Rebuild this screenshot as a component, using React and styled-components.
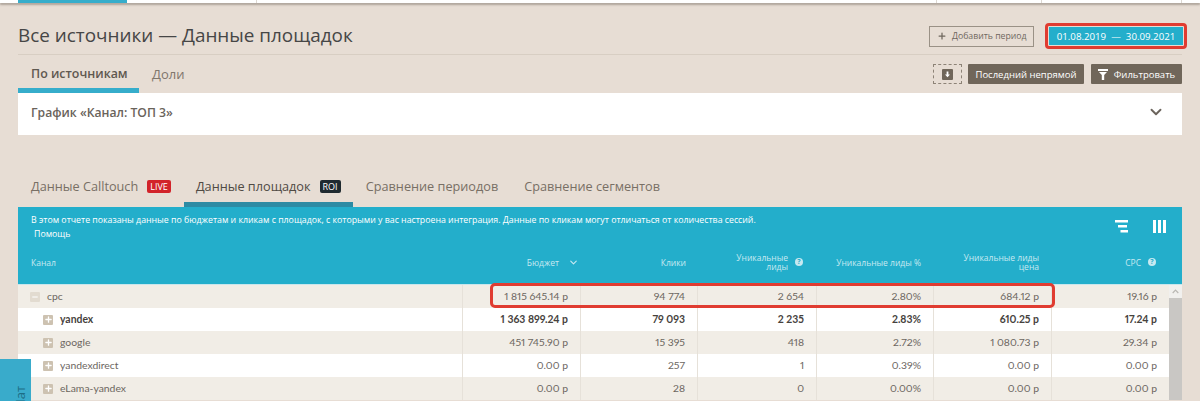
import React from 'react';
import styled, { createGlobalStyle } from 'styled-components';
import { Plus, ChevronDown, Minus } from 'lucide-react';

const GlobalStyle = createGlobalStyle`
  html, body {
    margin: 0;
    padding: 0;
    background: #e7ddd4;
    font-family: "Open Sans", "Noto Sans", sans-serif;
  }
  * { box-sizing: border-box; }
`;

const Page = styled('div')`
  position: relative;
  width: 1200px;
  height: 401px;
  overflow: hidden;
`;

const TopStrip = styled('div')`
  display: flex;
  height: 3px;
  background: #fff;
  box-shadow: 0 2px 2px rgba(90, 80, 70, 0.4);
  padding-left: 18px;
`;

const TopStripItem = styled('div')`
  width: ${p => p.$width}px;
  height: 3px;
  background: ${p => (p.$active ? '#36adcb' : 'transparent')};
  border-right: ${p => (p.$active ? 'none' : '1px solid #ddd8d2')};
`;

const Content = styled('div')`
  margin: 0 18px;
`;

const TitleRow = styled('div')`
  display: flex;
  align-items: center;
  justify-content: space-between;
  height: 52px;
  padding-top: 15px;
  border-bottom: 1px solid #d8cec3;
`;

const Title = styled('h1')`
  margin: -3px 0 0;
  font-size: 18.9px;
  font-weight: 400;
  color: #464646;
`;

const PeriodGroup = styled('div')`
  display: flex;
  align-items: center;
  gap: 11px;
  margin-right: -5px;
`;

const AddPeriod = styled('div')`
  display: flex;
  align-items: center;
  gap: 5px;
  width: 105px;
  height: 21px;
  padding-left: 7px;
  border: 1px solid #9a9186;
  font-size: 8.7px;
  color: #6f675e;
  white-space: nowrap;
`;

const DateHighlight = styled('div')`
  padding: 1px;
  border: 3px solid #e03c31;
  border-radius: 4px;
`;

const DateButton = styled('div')`
  display: flex;
  align-items: center;
  justify-content: center;
  width: 134px;
  height: 18px;
  background: #24aecb;
  color: #fff;
  font-size: 9.7px;
  white-space: pre;
`;

const SubRow = styled('div')`
  display: flex;
  align-items: flex-start;
  justify-content: space-between;
  height: 38px;
`;

const SubTabs = styled('div')`
  display: flex;
`;

const SubTab = styled('div')`
  width: ${p => p.$width}px;
  height: 38px;
  padding: 10px 0 0 13px;
  font-size: ${p => (p.$active ? 12.4 : 13)}px;
  font-weight: ${p => (p.$active ? 600 : 400)};
  color: ${p => (p.$active ? '#5f5850' : '#7f766c')};
  border-bottom: ${p => (p.$active ? '5px solid #36adcb' : 'none')};
`;

const Actions = styled('div')`
  display: flex;
  align-items: center;
  gap: 7px;
  padding-top: 9px;
`;

const ExportBox = styled('div')`
  display: flex;
  align-items: center;
  justify-content: center;
  width: 29px;
  height: 20px;
  margin-right: -1px;
  border: 1px dashed #8d8377;
`;

const ExportIcon = styled('div')`
  display: flex;
  align-items: center;
  justify-content: center;
  width: 11px;
  height: 11px;
  border-radius: 1px;
  background: #70665a;
`;

const DarkButton = styled('div')`
  display: flex;
  align-items: center;
  justify-content: center;
  gap: 6px;
  width: ${p => p.$width}px;
  height: 20px;
  background: #70665a;
  border-radius: 1px;
  color: #fff;
  font-size: 9.5px;
  white-space: nowrap;
`;

const ChartPanel = styled('div')`
  display: flex;
  align-items: center;
  justify-content: space-between;
  height: 42px;
  padding: 0 17px 4px 13px;
  background: #fff;
  font-size: 12.2px;
  font-weight: 600;
  color: #6a635b;
`;

const ReportTabs = styled('div')`
  display: flex;
  height: 42px;
  margin-top: 30px;
  padding-left: 13px;
`;

const ReportTab = styled('div')`
  display: flex;
  align-items: flex-start;
  gap: 9px;
  height: 42px;
  margin-right: ${p => p.$gap ?? 26}px;
  padding-top: 12px;
  font-size: 12.7px;
  color: ${p => (p.$active ? '#4f4a44' : '#786f65')};
  ${p => p.$active && 'width: 169px; justify-content: center; border-bottom: 5px solid #2d8ba4;'}
  white-space: nowrap;
`;

const Badge = styled('span')`
  display: inline-block;
  height: 13px;
  margin-top: 3px;
  padding: 0 3px;
  border-radius: 2px;
  background: ${p => p.$bg};
  color: #fff;
  font-size: 9px;
  line-height: 13px;
`;

const Card = styled('div')`
  position: relative;
  background: #23aecb;
`;

const InfoBlock = styled('div')`
  height: 41px;
  padding: 6px 0 0 13px;
  color: #fff;
  font-size: 8.77px;
  line-height: 14px;
  white-space: nowrap;
`;

const HelpLink = styled('div')`
  padding-left: 3px;
`;

const ViewIcons = styled('div')`
  position: absolute;
  top: 13px;
  right: 16px;
  display: flex;
  gap: 25px;
`;

const HeaderRow = styled('div')`
  display: grid;
  grid-template-columns: 445px 118px 117px 119px 117px 118px 117px 13px;
  height: 37px;
  padding-bottom: 8px;
  align-items: center;
  border-bottom: 1px solid #c9e6ec;
  color: #c7e9f1;
  font-size: 8.5px;
  line-height: 9px;
`;

const HeaderCell = styled('div')`
  display: flex;
  align-items: center;
  justify-content: ${p => (p.$left ? 'flex-start' : 'flex-end')};
  gap: ${p => p.$gap || 8}px;
  padding: ${p => (p.$left ? '0 0 0 13px' : `0 ${p.$pad ?? 13}px 0 0`)};
  text-align: right;
  white-space: nowrap;
`;

const Help = styled('span')`
  flex: none;
  width: 8px;
  height: 8px;
  border-radius: 50%;
  background: #c7e9f1;
  color: #23aecb;
  font-size: 7px;
  font-weight: 700;
  line-height: 8px;
  text-align: center;
`;

const Body = styled('div')`
  position: relative;
  background: #fff;
`;

const Row = styled('div')`
  display: grid;
  grid-template-columns: 445px 118px 117px 119px 117px 118px 117px;
  width: 1151px;
  height: 23px;
  background: ${p => (p.$odd ? '#f1ede6' : '#fff')};
  color: ${p => (p.$bold ? '#46423d' : '#6c665f')};
  font-family: Lato, "Open Sans", sans-serif;
  font-size: 10.4px;
  font-weight: ${p => (p.$bold ? 700 : 400)};
  font-variant-numeric: proportional-nums;
  white-space: pre;
`;

const Cell = styled('div')`
  display: flex;
  align-items: center;
  justify-content: flex-end;
  padding: 0 12px 2px 0;
  border-right: 1px solid #e6e1d9;
  &:last-child { border-right: none; }
`;

const NameCell = styled(Cell)`
  justify-content: flex-start;
  gap: 7px;
  padding: 0 0 2px ${p => (p.$root ? 12 : 25)}px;
`;

const Toggle = styled('span')`
  display: flex;
  align-items: center;
  justify-content: center;
  width: 10px;
  height: 10px;
  margin-top: 2px;
  border-radius: 1px;
  background: ${p => (p.$root ? '#e2dbd0' : '#cdc2b1')};
`;

const Highlight = styled('div')`
  position: absolute;
  top: -2px;
  left: 472px;
  width: 565px;
  height: 25px;
  border: 3px solid #e03c31;
  border-radius: 5px;
`;

const Scrollbar = styled('div')`
  position: absolute;
  top: 0;
  right: 0;
  bottom: 0;
  width: 13px;
  background: #c9c7c4;
`;

const ScrollUp = styled('div')`
  display: flex;
  align-items: center;
  justify-content: center;
  height: 13px;
  background: #f1f0ee;
`;

const ChatTab = styled('div')`
  position: absolute;
  left: 0;
  bottom: 0;
  width: 31px;
  height: 42px;
  background: #39abcb;
  color: #1d6d85;
  font-size: 13px;
  overflow: hidden;
`;

const ChatLabel = styled('div')`
  position: absolute;
  left: 9px;
  top: 31px;
  transform: rotate(-90deg);
  transform-origin: center;
  line-height: 14px;
`;

const rows = [
  { name: 'cpc', root: true, cells: ['1 815 645.14 р', '94 774', '2 654', '2.80%', '684.12 р', '19.16 р'] },
  { name: 'yandex', bold: true, cells: ['1 363 899.24 р', '79 093', '2 235', '2.83%', '610.25 р', '17.24 р'] },
  { name: 'google', cells: ['451 745.90 р', '15 395', '418', '2.72%', '1 080.73 р', '29.34 р'] },
  { name: 'yandexdirect', cells: ['0.00 р', '257', '1', '0.39%', '0.00 р', '0.00 р'] },
  { name: 'eLama-yandex', cells: ['0.00 р', '28', '0', '0.00%', '0.00 р', '0.00 р'] },
];

const App = () => (
  <Page>
    <GlobalStyle />
    <TopStrip>
      <TopStripItem $active $width={109} />
      <TopStripItem $width={130} />
      <TopStripItem $width={680} />
      <TopStripItem $width={105} />
      <TopStripItem $width={140} />
    </TopStrip>
    <Content>
      <TitleRow>
        <Title>Все источники — Данные площадок</Title>
        <PeriodGroup>
          <AddPeriod>
            <Plus size={10} strokeWidth={3} color="#6f675e" />
            Добавить период
          </AddPeriod>
          <DateHighlight>
            <DateButton>01.08.2019  —  30.09.2021</DateButton>
          </DateHighlight>
        </PeriodGroup>
      </TitleRow>
      <SubRow>
        <SubTabs>
          <SubTab $active $width={121}>По источникам</SubTab>
          <SubTab $width={70}>Доли</SubTab>
        </SubTabs>
        <Actions>
          <ExportBox>
            <ExportIcon>
              <svg width="7" height="7" viewBox="0 0 7 7">
                <path d="M2.6 0.5h1.8v3h1.6L3.5 6.2 1 3.5h1.6z" fill="#fff" />
              </svg>
            </ExportIcon>
          </ExportBox>
          <DarkButton $width={116}>Последний непрямой</DarkButton>
          <DarkButton $width={91}>
            <svg width="10" height="11" viewBox="0 0 10 11">
              <path d="M0 0h10v2H0zM1 3h8L6.2 6v5H3.8V6z" fill="#fff" />
            </svg>
            Фильтровать
          </DarkButton>
        </Actions>
      </SubRow>
      <ChartPanel>
        График «Канал: ТОП 3»
        <ChevronDown size={18} strokeWidth={2.5} color="#6b645c" />
      </ChartPanel>
      <ReportTabs>
        <ReportTab $gap={13}>
          Данные Calltouch <Badge $bg="#d2232a">LIVE</Badge>
        </ReportTab>
        <ReportTab $active $gap={13}>
          Данные площадок <Badge $bg="#1f2a30">ROI</Badge>
        </ReportTab>
        <ReportTab>Сравнение периодов</ReportTab>
        <ReportTab>Сравнение сегментов</ReportTab>
      </ReportTabs>
      <Card>
        <InfoBlock>
          В этом отчете показаны данные по бюджетам и кликам с площадок, с которыми у вас настроена интеграция. Данные по кликам могут отличаться от количества сессий.
          <HelpLink>Помощь</HelpLink>
        </InfoBlock>
        <ViewIcons>
          <svg width="13" height="13" viewBox="0 0 13 13">
            <path d="M0 0h13v2.4H0zM3 5h9v2.4H3zM5.5 10H13v2.4H5.5z" fill="#fff" />
          </svg>
          <svg width="13" height="13" viewBox="0 0 13 13">
            <path d="M0 0h3v13H0zM5 0h3v13H5zM10 0h3v13h-3z" fill="#fff" />
          </svg>
        </ViewIcons>
        <HeaderRow>
          <HeaderCell $left>Канал</HeaderCell>
          <HeaderCell $gap={9} $pad={2}>
            Бюджет
            <ChevronDown size={11} strokeWidth={2.5} color="#c7e9f1" />
          </HeaderCell>
          <HeaderCell $pad={12}>Клики</HeaderCell>
          <HeaderCell $gap={7} $pad={14}>
            <span>Уникальные<br />лиды</span>
            <Help>?</Help>
          </HeaderCell>
          <HeaderCell>Уникальные лиды %</HeaderCell>
          <HeaderCell>
            <span>Уникальные лиды<br />цена</span>
          </HeaderCell>
          <HeaderCell $gap={7}>
            CPC
            <Help>?</Help>
          </HeaderCell>
        </HeaderRow>
        <Body>
          {rows.map((row, i) => (
            <Row key={row.name} $odd={i % 2 === 0} $bold={row.bold}>
              <NameCell $root={row.root}>
                <Toggle $root={row.root}>
                  {row.root ? (
                    <Minus size={8} strokeWidth={3} color="#fff" />
                  ) : (
                    <Plus size={9} strokeWidth={3.5} color="#fff" />
                  )}
                </Toggle>
                {row.name}
              </NameCell>
              {row.cells.map((value, j) => (
                <Cell key={j}>{value}</Cell>
              ))}
            </Row>
          ))}
          <Highlight />
          <Scrollbar>
            <ScrollUp>
              <svg width="7" height="5" viewBox="0 0 7 5">
                <path d="M0.7 4 3.5 1.2 6.3 4" fill="none" stroke="#b9b7b3" strokeWidth="1.2" />
              </svg>
            </ScrollUp>
          </Scrollbar>
        </Body>
      </Card>
    </Content>
    <ChatTab>
      <ChatLabel>Чат</ChatLabel>
    </ChatTab>
  </Page>
);

export default App;
